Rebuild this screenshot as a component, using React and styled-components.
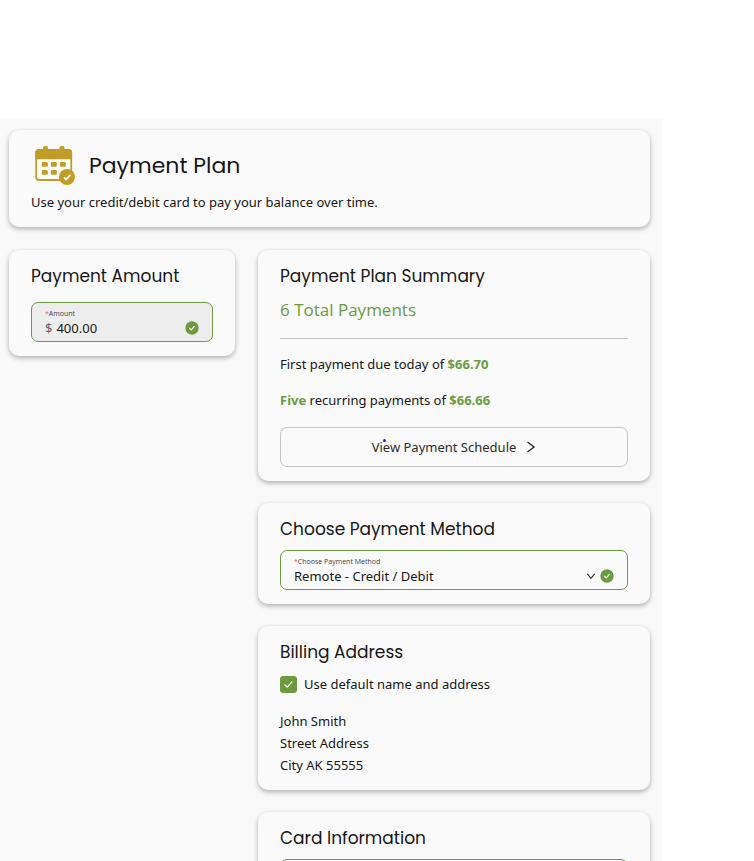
import React, { useState } from 'react';
import styled, { createGlobalStyle } from 'styled-components';

const GREEN = '#6c9a3f';
const GOLD = '#c19d27';

const GlobalStyle = createGlobalStyle`
  *, *::before, *::after {
    box-sizing: border-box;
  }

  body {
    margin: 0;
    background: #ffffff;
    color: #161616;
    font-family: 'Noto Sans', 'Open Sans', sans-serif;
    font-size: 13px;
    line-height: 22px;
  }

  h1, h2, p {
    margin: 0;
    font-weight: 400;
  }
`;

const Page = styled.div`
  height: 100vh;
  overflow: hidden;
  padding: 119px 92px 0 0;
`;

const Panel = styled.main`
  min-height: 100%;
  padding: 11px 12px 0 9px;
  background: #f9f9f9;
`;

const Columns = styled.div`
  display: grid;
  grid-template-columns: minmax(0, 226fr) minmax(0, 392fr);
  align-items: start;
  gap: 23px;
  margin-top: 23px;
`;

const Stack = styled.div`
  display: flex;
  flex-direction: column;
  gap: 22px;
`;

const Card = styled.section`
  padding: 14px 22px;
  border-radius: 10px;
  background: #fafafa;
  box-shadow: 0 2px 5px rgba(0, 0, 0, 0.3);
`;

const PlanHeader = styled.div`
  display: flex;
  align-items: center;
  gap: 14px;
  margin-bottom: 3px;
`;

const PageTitle = styled.h1`
  font-family: Poppins, Inter, sans-serif;
  font-size: 22px;
  line-height: 44px;
`;

const CardTitle = styled.h2`
  margin-bottom: ${props => props.$gap || 9}px;
  font-family: Poppins, Inter, sans-serif;
  font-size: 17px;
  line-height: 24px;
`;

const TotalPayments = styled.p`
  padding-bottom: 15px;
  border-bottom: 1px solid #bfbfbf;
  color: ${GREEN};
  font-family: 'Open Sans', sans-serif;
  font-size: 17px;
  line-height: 26px;
`;

const PaymentLine = styled.p`
  margin-top: 14px;

  strong {
    color: ${GREEN};
    font-weight: 700;
  }
`;

const ScheduleButton = styled.button`
  position: relative;
  display: flex;
  align-items: center;
  justify-content: center;
  gap: 10px;
  width: 100%;
  height: 40px;
  margin-top: 16px;
  padding: 0;
  border: 1px solid #c4c4c4;
  border-radius: 7px;
  background: transparent;
  color: #2b2b2b;
  font: inherit;
  cursor: pointer;
`;

const PointerDot = styled.span`
  position: absolute;
  top: 11px;
  left: 102px;
  width: 3px;
  height: 3px;
  border-radius: 50%;
  background: #1a1aff;
`;

const Field = styled.div`
  display: flex;
  align-items: flex-end;
  height: 40px;
  padding: 0 13px 4px;
  border: 1px solid ${GREEN};
  border-radius: 7px;
  background: ${props => (props.$filled ? '#ededed' : 'transparent')};
`;

const FieldBody = styled.div`
  flex: 1;
  min-width: 0;
`;

const FieldLabel = styled.label`
  display: block;
  color: #3d3d4d;
  font-family: 'Open Sans', sans-serif;
  font-size: 7px;
  line-height: 10px;

  &::before {
    content: '*';
    color: #e8604c;
  }
`;

const FieldRow = styled.div`
  display: flex;
  align-items: center;
  gap: 4px;
  height: 18px;
`;

const Currency = styled.span`
  color: #666666;
`;

const TextInput = styled.input`
  flex: 1;
  min-width: 0;
  padding: 0;
  border: 0;
  outline: 0;
  background: transparent;
  color: #161616;
  font: inherit;
`;

const Select = styled.select`
  flex: 1;
  min-width: 0;
  padding: 0;
  border: 0;
  outline: 0;
  appearance: none;
  background: transparent;
  color: #161616;
  font: inherit;
`;

const CheckLabel = styled.label`
  display: flex;
  align-items: center;
  gap: 7px;
`;

const CheckBoxWrap = styled.span`
  display: grid;
  width: 17px;
  height: 17px;

  > * {
    grid-area: 1 / 1;
  }

  svg {
    pointer-events: none;
  }
`;

const CheckBox = styled.input`
  width: 17px;
  height: 17px;
  margin: 0;
  appearance: none;
  border: 1px solid ${GREEN};
  border-radius: 3px;
  background: ${props => (props.checked ? GREEN : '#ffffff')};
`;

const Address = styled.address`
  margin-top: 15px;
  font-style: normal;
`;

function CalendarIcon() {
  return (
    <svg width="44" height="44" viewBox="0 0 44 44" aria-hidden="true">
      <rect x="5.2" y="6" width="35" height="30" rx="3" fill="#fdfdfb" stroke={GOLD} strokeWidth="1.8" />
      <path d="M4.300 8.500a3.500 3.500 0 0 1 3.500-3.500h29.800a3.500 3.500 0 0 1 3.500 3.500v6.800H4.300z" fill={GOLD} />
      <rect x="12" y="2" width="5" height="7" rx="2" fill={GOLD} />
      <rect x="28.500" y="2" width="5" height="7" rx="2" fill={GOLD} />
      <g fill={GOLD}>
        <rect x="10.800" y="18" width="6" height="4.800" rx="1.200" />
        <rect x="19.800" y="18" width="6" height="4.800" rx="1.200" />
        <rect x="28.800" y="18" width="6" height="4.800" rx="1.200" />
        <rect x="10.800" y="26" width="6" height="4.800" rx="1.200" />
        <rect x="19.800" y="26" width="6" height="4.800" rx="1.200" />
      </g>
      <circle cx="36" cy="33" r="8" fill={GOLD} />
      <path d="M33 33.300l2.200 2.200 4.200-4.700" fill="none" stroke="#ffffff" strokeWidth="1.800" />
    </svg>
  );
}

function ValidIcon() {
  return (
    <svg width="14" height="14" viewBox="0 0 14 14" aria-hidden="true">
      <circle cx="7" cy="7" r="6.700" fill={GREEN} />
      <path d="M4.300 7l1.900 1.900 3.400-3.700" fill="none" stroke="#ffffff" strokeWidth="1.200" />
    </svg>
  );
}

function Chevron({ down }) {
  return down ? (
    <svg width="10" height="10" viewBox="0 0 10 10" aria-hidden="true">
      <path d="M1.300 2.800L5 7.300l3.700-4.500" fill="none" stroke="#333333" strokeWidth="1.200" />
    </svg>
  ) : (
    <svg width="10" height="12" viewBox="0 0 10 12" aria-hidden="true">
      <path d="M1.500 1l6.500 5-6.500 5" fill="none" stroke="#2b2b2b" strokeWidth="1.400" />
    </svg>
  );
}

export default function App() {
  const [amount, setAmount] = useState('400.00');
  const [useDefault, setUseDefault] = useState(true);
  const [cardNumber, setCardNumber] = useState('');

  return (
    <Page>
      <GlobalStyle />
      <Panel>
        <Card>
          <PlanHeader>
            <CalendarIcon />
            <PageTitle>Payment Plan</PageTitle>
          </PlanHeader>
          <p>Use your credit/debit card to pay your balance over time.</p>
        </Card>

        <Columns>
          <Card>
            <CardTitle $gap={14}>Payment Amount</CardTitle>
            <Field $filled>
              <FieldBody>
                <FieldLabel htmlFor="amount">Amount</FieldLabel>
                <FieldRow>
                  <Currency>$</Currency>
                  <TextInput id="amount" value={amount} onChange={e => setAmount(e.target.value)} />
                  <ValidIcon />
                </FieldRow>
              </FieldBody>
            </Field>
          </Card>

          <Stack>
            <Card>
              <CardTitle>Payment Plan Summary</CardTitle>
              <TotalPayments>6 Total Payments</TotalPayments>
              <PaymentLine>
                First payment due today of <strong>$66.70</strong>
              </PaymentLine>
              <PaymentLine>
                <strong>Five</strong> recurring payments of <strong>$66.66</strong>
              </PaymentLine>
              <ScheduleButton type="button">
                View Payment Schedule
                <Chevron />
                <PointerDot />
              </ScheduleButton>
            </Card>

            <Card>
              <CardTitle>Choose Payment Method</CardTitle>
              <Field>
                <FieldBody>
                  <FieldLabel htmlFor="method">Choose Payment Method</FieldLabel>
                  <FieldRow>
                    <Select id="method" defaultValue="remote">
                      <option value="remote">Remote - Credit / Debit</option>
                    </Select>
                    <Chevron down />
                    <ValidIcon />
                  </FieldRow>
                </FieldBody>
              </Field>
            </Card>

            <Card>
              <CardTitle>Billing Address</CardTitle>
              <CheckLabel>
                <CheckBoxWrap>
                  <CheckBox
                    type="checkbox"
                    checked={useDefault}
                    onChange={e => setUseDefault(e.target.checked)}
                  />
                  <svg width="17" height="17" viewBox="0 0 17 17" aria-hidden="true">
                    <path d="M4.500 8.500l2.700 2.700 5-5.600" fill="none" stroke="#ffffff" strokeWidth="1.200" />
                  </svg>
                </CheckBoxWrap>
                Use default name and address
              </CheckLabel>
              <Address>
                John Smith
                <br />
                Street Address
                <br />
                City AK 55555
              </Address>
            </Card>

            <Card>
              <CardTitle>Card Information</CardTitle>
              <Field>
                <TextInput
                  aria-label="Card number"
                  value={cardNumber}
                  onChange={e => setCardNumber(e.target.value)}
                />
              </Field>
            </Card>
          </Stack>
        </Columns>
      </Panel>
    </Page>
  );
}
